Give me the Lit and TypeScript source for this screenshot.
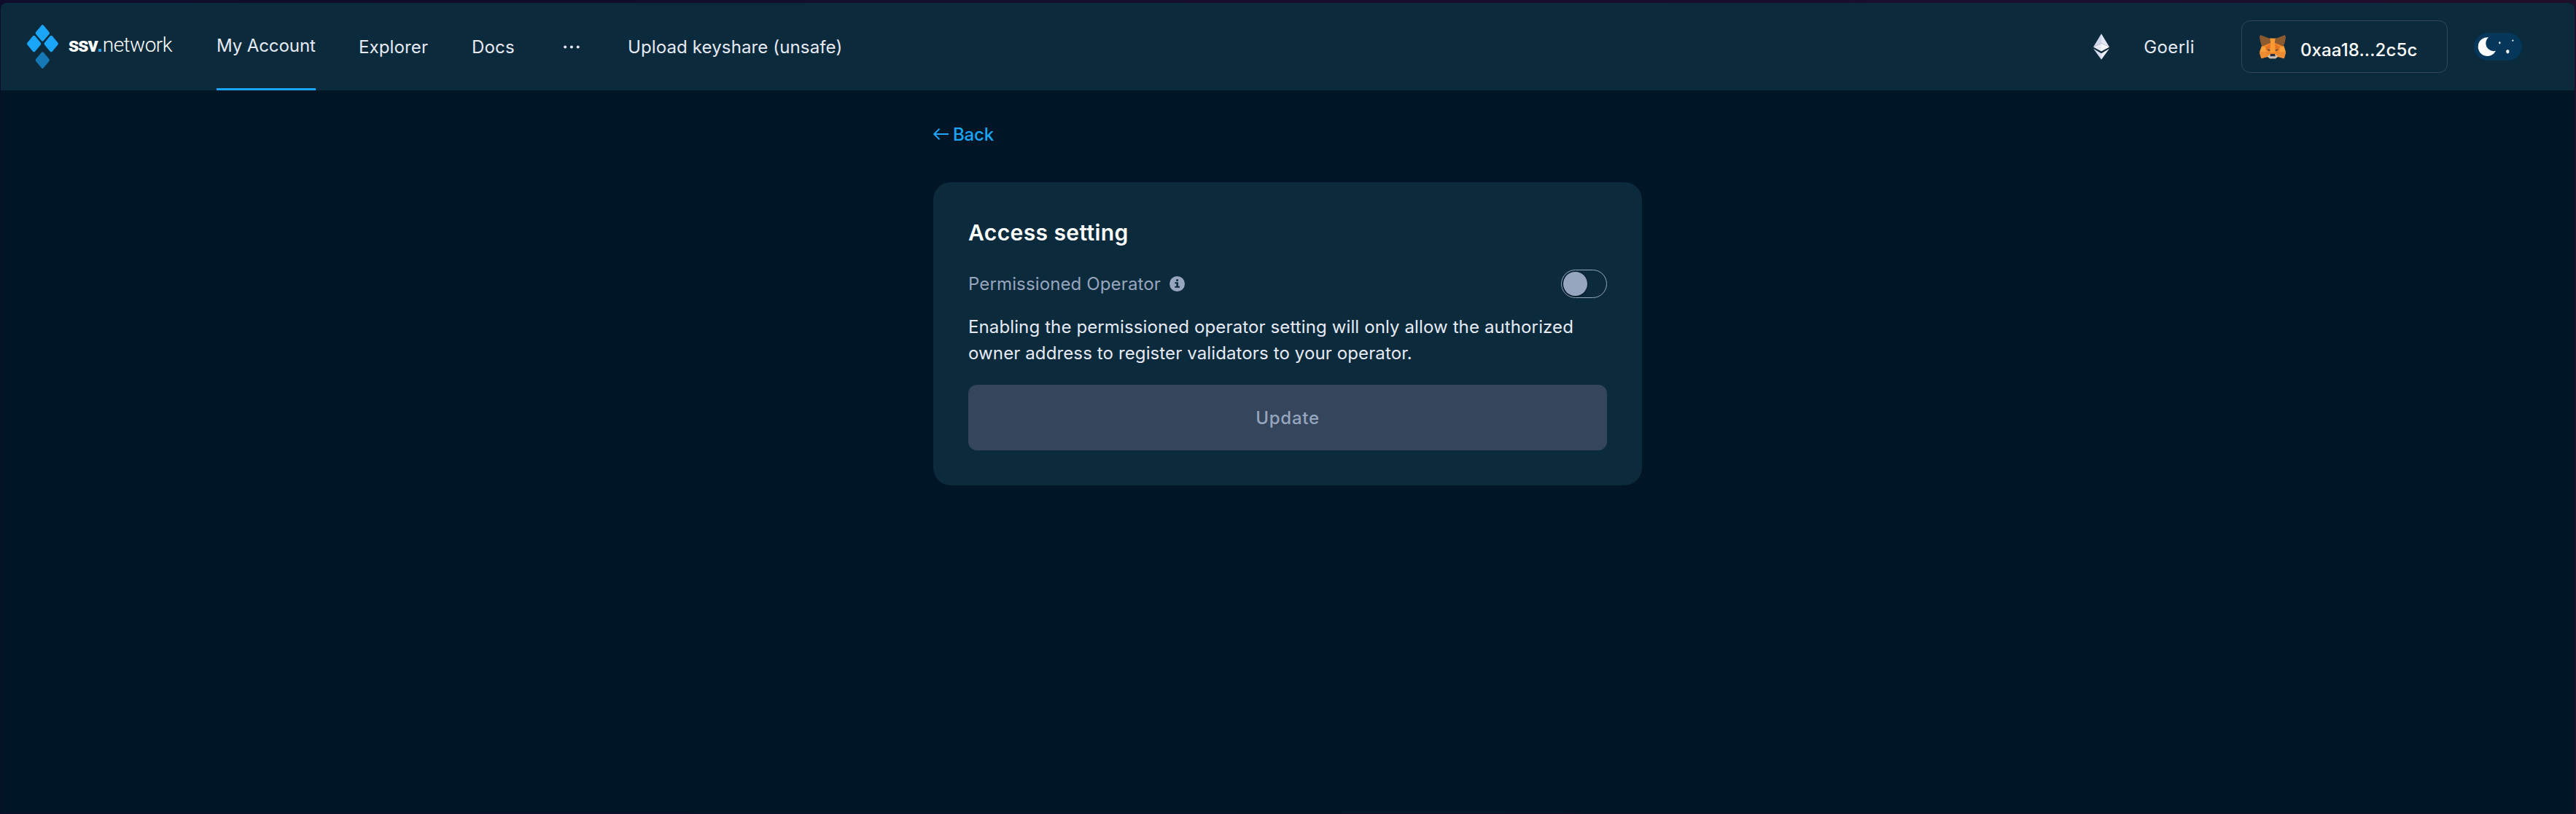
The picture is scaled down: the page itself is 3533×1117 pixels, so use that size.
import { LitElement, html, css, svg } from "lit";
import { customElement, property } from "lit/decorators.js";

const diamond = (cx: number, cy: number, fill: string) => svg`
  <path fill=${fill} d="M${cx - 1.4} ${cy - 10.7} Q${cx} ${cy - 12} ${cx + 1.4} ${cy - 10.7}
    L${cx + 9.1} ${cy - 1.5} Q${cx + 10.1} ${cy} ${cx + 9.1} ${cy + 1.5}
    L${cx + 1.4} ${cy + 10.7} Q${cx} ${cy + 12} ${cx - 1.4} ${cy + 10.7}
    L${cx - 9.1} ${cy + 1.5} Q${cx - 10.1} ${cy} ${cx - 9.1} ${cy - 1.5} Z"/>`;

const logoIcon = html`<svg width="43" height="60" viewBox="0 0 43 60">
  ${diamond(21.3, 11.4, "#1ba5f8")}${diamond(9.6, 26, "#1ba5f8")}
  ${diamond(33.2, 26, "#1ba5f8")}${diamond(21.3, 48.6, "#1678b4")}
</svg>`;

const ethIcon = html`<svg width="22" height="36" viewBox="60 33 66 107">
  <path fill="#cfd5ea" d="M93 33 60 88 93 73Z"/>
  <path fill="#e3e6f5" d="M93 33 126 88 93 73Z"/>
  <path fill="#e6e9f7" d="M60 88 93 73V106Z"/>
  <path fill="#f7f8fd" d="M126 88 93 73V106Z"/>
  <path fill="#d5daee" d="M60 95 93 114V140Z"/>
  <path fill="#eceefa" d="M126 95 93 114V140Z"/>
</svg>`;

const foxIcon = html`<svg width="36" height="33" viewBox="0 0 108 99">
  <path fill="#f0872a" d="M41 14H67L100 46 108 74 101 97 76 90 66 97H42L32 90 7 97 0 74 9 46Z"/>
  <path fill="#f99b35" d="M41 14H67L62 38 64 72H44L46 38Z"/>
  <path fill="#f9a03a" d="M9 46 0 70H28L24 50ZM100 46 108 70H80L84 50Z"/>
  <path fill="#e27625" d="M44 36 24 50 28 62 42 64ZM64 36 84 50 80 62 66 64Z"/>
  <path fill="#ee8c33" d="M0 72H29L32 90 7 97ZM108 72H79L76 90 101 97Z"/>
  <path fill="#8c5a2f" d="M3 0 43 15 46 32 10 47 5 34 0 10ZM105 0 65 15 62 32 98 47 103 34 108 10Z"/>
  <path fill="#5a4636" d="M32 58 43 61 42 66 34 64ZM76 58 65 61 66 66 74 64Z"/>
  <path fill="#c9beb4" d="M32 88 44 79H64L76 88 66 97H42Z"/>
  <path fill="#27303c" d="M45 78H63L65 88H43Z"/>
</svg>`;

const moonIcon = html`<svg width="66" height="38" viewBox="69 44 198 114">
  <rect x="69" y="44" width="198" height="114" rx="57" fill="#043759"/>
  <path fill="#fff" d="M129 63A38.5 38.5 0 1 0 159 118A32 32 0 0 1 129 63Z"/>
  <path fill="#fff" d="M175 79 179 85 175 91 171 85Z"/>
  <path fill="#fff" d="M229 72 233 76 229 80 225 76Z"/>
  <path fill="#fff" d="M208 113 214 117V125L208 130 202 125V117Z"/>
</svg>`;

const infoIcon = html`<svg width="21" height="21" viewBox="0 0 21 21">
  <circle cx="10.5" cy="10.5" r="10.5" fill="#97a5bf"/>
  <rect x="9.2" y="4.3" width="2.8" height="2.6" fill="#0b2a3c"/>
  <path fill="#0b2a3c" d="M7.3 8.2H12V13.7H14V15.8H7.3V13.7H9.4V10.2H7.3Z"/>
</svg>`;

const arrowIcon = html`<svg width="21" height="16" viewBox="0 0 21 16" fill="none" stroke="#1ba5f8" stroke-width="2">
  <path d="M1 8H21M8.5 .8 1.2 8 8.5 15.2"/>
</svg>`;

@customElement("top-bar")
export class TopBar extends LitElement {
  static styles = css`
    :host { display: flex; height: 120px; box-sizing: border-box; padding: 0 72px 0 36px;
      justify-content: space-between; background: #0b2a3c; color: #e6eaf7;
      border-radius: 8px 8px 0 0; white-space: nowrap; }
    svg { display: block; flex: none; }
    .group, .logo, .item, .wallet { display: flex; align-items: center; }
    .group { align-items: stretch; }
    .right { align-items: center; }
    .logo { gap: 14px; margin-right: 60px; width: 200px; }
    .word { display: flex; align-items: baseline; padding-bottom: 5px; color: #fff;
      font: 300 28px/34px Roboto, sans-serif; letter-spacing: -.52px; }
    .brand { font-weight: 800; letter-spacing: -1.1px; }
    .dot { width: 4px; height: 4px; background: #1ba5f8; margin: 0 2px 0 1px; }
    .item { letter-spacing: .13px; padding-top: 1px; }
    .account { letter-spacing: -.09px; border-bottom: 3px solid #1ba5f8; padding: 0; width: 136px;
      margin-right: 59px; }
    .explorer { width: 155px; }
    .docs { width: 126px; letter-spacing: .2px; }
    .more { width: 88px; padding-top: 0; }
    .network { letter-spacing: .42px; margin: 0 64px 0 47px; padding-top: 1px; }
    .wallet { box-sizing: border-box; width: 283px; height: 72px; padding-left: 24px; gap: 20px;
      border: 1px solid #34455a; border-radius: 12px; color: #fff; font-weight: 450; margin-right: 36px; }
    .fox { padding-top: 1px; }
    .address { padding-top: 9px; letter-spacing: .12px; }
  `;

  render() {
    return html`
      <div class="group">
        <div class="logo">${logoIcon}
          <div class="word"><span class="brand">ssv</span><span class="dot"></span><span>network</span></div>
        </div>
        <div class="item account">My Account</div>
        <div class="item explorer">Explorer</div>
        <div class="item docs">Docs</div>
        <div class="item more">
          <svg width="22" height="5" viewBox="0 0 22 5" fill="#e6eaf7">
            <circle cx="2.1" cy="2.5" r="2"/><circle cx="10.9" cy="2.5" r="2"/><circle cx="19.7" cy="2.5" r="2"/>
          </svg>
        </div>
        <div class="item">Upload keyshare (unsafe)</div>
      </div>
      <div class="group right">
        ${ethIcon}
        <div class="network">Goerli</div>
        <div class="wallet"><div class="fox">${foxIcon}</div><div class="address">0xaa18...2c5c</div></div>
        ${moonIcon}
      </div>`;
  }
}

@customElement("toggle-switch")
export class ToggleSwitch extends LitElement {
  @property({ type: Boolean }) on = false;

  static styles = css`
    :host { display: flex; box-sizing: border-box; width: 63px; height: 39px; padding: 2px;
      align-items: center; border: 1px solid #97a5bf; border-radius: 20px; }
    .knob { width: 33px; height: 33px; border-radius: 50%; background: #97a5bf;
      box-shadow: 0 1px 3px rgba(0, 0, 0, .4); }
    .on { margin-left: auto; }
  `;

  render() {
    return html`<div class="knob ${this.on ? "on" : ""}"></div>`;
  }
}

@customElement("access-card")
export class AccessCard extends LitElement {
  static styles = css`
    :host { display: block; box-sizing: border-box; width: 972px; height: 416px; padding: 48px;
      border-radius: 24px; background: #0b2a3c; color: #e6eaf7; }
    .title { margin: 0 0 30px; color: #fff; font-size: 30px; line-height: 42px; font-weight: 600;
      letter-spacing: .4px; }
    .row { display: flex; align-items: center; justify-content: space-between; }
    .label { display: flex; align-items: center; gap: 12px; color: #97a5bf; letter-spacing: .13px; }
    .name { padding-top: 1px; }
    svg { display: block; }
    .text { margin: 22px 0 25px; line-height: 36px; letter-spacing: .12px; }
    .button { display: block; width: 100%; height: 90px; border: 0; border-radius: 12px; padding: 2px 0 0;
      background: #34455c; color: #97a5bf; font: inherit; font-weight: 550; letter-spacing: .75px; }
  `;

  render() {
    return html`
      <h1 class="title">Access setting</h1>
      <div class="row">
        <div class="label"><span class="name">Permissioned Operator</span>${infoIcon}</div>
        <toggle-switch></toggle-switch>
      </div>
      <p class="text">Enabling the permissioned operator setting will only allow the authorized owner address to register validators to your operator.</p>
      <button class="button">Update</button>`;
  }
}

@customElement("app-root")
export class AppRoot extends LitElement {
  static styles = css`
    :host { display: block; box-sizing: border-box; height: 1117px; padding: 4px 2px 1px 1px;
      background: linear-gradient(90deg, #0f0d2c, #1e0f2c);
      font: 400 24px/30px Inter, "Liberation Sans", sans-serif; }
    .window { height: 1112px; background: #001526; border-radius: 8px 8px 0 0; }
    .content { width: 972px; margin: 0 auto; padding: 45px 0 0 0; }
    .back { display: flex; align-items: center; gap: 6px; height: 30px; color: #1ba5f8; font-weight: 450;
      letter-spacing: -.2px; margin-bottom: 51px; }
    .back-label { padding-top: 1px; }
    svg { display: block; }
  `;

  render() {
    return html`
      <div class="window">
        <top-bar></top-bar>
        <div class="content">
          <div class="back">${arrowIcon}<span class="back-label">Back</span></div>
          <access-card></access-card>
        </div>
      </div>`;
  }
}
